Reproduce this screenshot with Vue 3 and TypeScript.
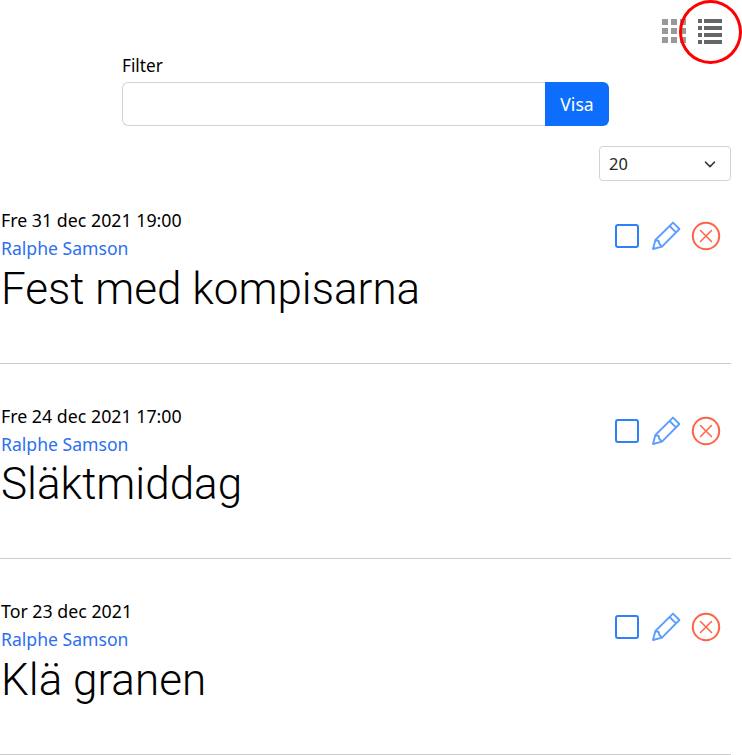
<script setup lang="ts">
interface EventRow {
  date: string
  owner: string
  title: string
}

const events: EventRow[] = [
  { date: 'Fre 31 dec 2021 19:00', owner: 'Ralphe Samson', title: 'Fest med kompisarna' },
  { date: 'Fre 24 dec 2021 17:00', owner: 'Ralphe Samson', title: 'Släktmiddag' },
  { date: 'Tor 23 dec 2021', owner: 'Ralphe Samson', title: 'Klä granen' },
]

const gridCells = [0, 1, 2, 3, 4, 5, 6, 7, 8]
const listRows = [0, 1, 2, 3]
</script>

<template>
  <div class="page">
    <div class="view-switch">
      <svg class="view-icon" width="26" height="26" viewBox="0 0 26 26" fill="#999">
        <rect
          v-for="c in gridCells"
          :key="c"
          :x="1 + (c % 3) * 9"
          :y="1 + Math.floor(c / 3) * 9"
          width="6"
          height="6"
        />
      </svg>
      <svg class="view-icon" width="26" height="26" viewBox="0 0 26 26" fill="#666">
        <g v-for="r in listRows" :key="r">
          <rect x="1" :y="1 + r * 7" width="4" height="4" />
          <rect x="7" :y="1 + r * 7" width="18" height="4" />
        </g>
      </svg>
      <span class="view-ring" />
    </div>

    <form class="filter" @submit.prevent>
      <label class="filter__label" for="filter-input">Filter</label>
      <div class="filter__group">
        <input id="filter-input" class="filter__input" type="text" />
        <button class="filter__btn" type="submit">Visa</button>
      </div>
    </form>

    <div class="page-size">
      <div class="page-size__select">
        <span>20</span>
        <svg width="16" height="16" viewBox="0 0 16 16" fill="none" stroke="#343a40" stroke-width="2" stroke-linecap="round" stroke-linejoin="round">
          <path d="M2 5l6 6 6-6" transform="translate(2 2.4) scale(.75)" />
        </svg>
      </div>
    </div>

    <ul class="events">
      <li v-for="ev in events" :key="ev.title" class="event">
        <div class="event__head">
          <div class="event__meta">
            <div class="event__date">{{ ev.date }}</div>
            <a class="event__owner" href="#">{{ ev.owner }}</a>
          </div>
          <div class="event__actions">
            <span class="event__check" />
            <svg width="30" height="30" viewBox="0 0 30 30" fill="none" stroke="#5c9dff" stroke-width="1.9" stroke-linejoin="round">
              <path d="M2 28l2.4-9L22 1.6 28.4 8 11 25.6z" />
              <path d="M18.6 5l6.4 6.4M4.4 19l3.2 1 .8 3 2.6 2.6" />
            </svg>
            <svg width="30" height="30" viewBox="0 0 30 30" fill="none" stroke="#ff6347" stroke-width="2" stroke-linecap="round">
              <circle cx="15" cy="15" r="13.2" />
              <path d="M9.5 9.5l11 11M20.5 9.5l-11 11" stroke-width="1.5" />
            </svg>
          </div>
        </div>
        <h2 class="event__title">{{ ev.title }}</h2>
      </li>
    </ul>
  </div>
</template>

<style>
body {
  margin: 0;
  background: #fff;
}
</style>

<style scoped>
.page {
  box-sizing: border-box;
  width: 742px;
  height: 755px;
  padding-right: 11px;
  overflow: hidden;
  font-family: "Noto Sans", "Open Sans", sans-serif;
  color: #000;
}

.view-switch {
  position: relative;
  display: flex;
  justify-content: flex-end;
  gap: 10px;
  padding-top: 18px;
  padding-right: 8px;
  height: 35px;
}

.view-icon {
  display: block;
}

.view-ring {
  position: absolute;
  left: 679px;
  top: 0;
  width: 63px;
  height: 64px;
  box-sizing: border-box;
  border: 3.5px solid #f00;
  border-radius: 50%;
}

.filter {
  margin: 0 122px 0 122px;
  width: 487px;
  padding-top: 0;
}

.filter__label {
  display: block;
  height: 29px;
  font-size: 17.2px;
  line-height: 26px;
}

.filter__group {
  display: flex;
  height: 44px;
}

.filter__input {
  flex: 1;
  min-width: 0;
  box-sizing: border-box;
  border: 1px solid #ced4da;
  border-right: 0;
  border-radius: 6px 0 0 6px;
  outline: none;
}

.filter__btn {
  width: 64px;
  border: 0;
  border-radius: 0 6px 6px 0;
  background: #0d6efd;
  color: #fff;
  font: inherit;
  font-size: 17.6px;
}

.page-size {
  display: flex;
  justify-content: flex-end;
  margin-top: 20px;
}

.page-size__select {
  box-sizing: border-box;
  width: 132px;
  height: 35px;
  display: flex;
  align-items: center;
  justify-content: space-between;
  padding: 0 12px 0 9px;
  border: 1px solid #ced4da;
  border-radius: 4px;
  font-size: 16.4px;
  color: #212529;
}

.events {
  list-style: none;
  margin: 0;
  padding: 0;
}

.event {
  box-sizing: border-box;
  height: 195.5px;
  border-bottom: 1px solid #ccc;
}

.events .event:first-child {
  height: 182.5px;
}

.event__head {
  display: flex;
  justify-content: space-between;
  align-items: flex-start;
}

.event__meta {
  padding-left: 1px;
}

.event:first-child .event__head {
  padding-top: 27px;
}

.event:not(:first-child) .event__head {
  padding-top: 40px;
}

.event__date {
  font-size: 17.8px;
  line-height: 24px;
  height: 28px;
}

.event__owner {
  display: block;
  font-size: 17.6px;
  line-height: 24px;
  color: #2c6ff0;
  text-decoration: none;
}

.event__actions {
  display: flex;
  align-items: center;
  gap: 10px;
  padding-right: 10px;
  margin-top: 12.7px;
}

.event__check {
  box-sizing: border-box;
  width: 24px;
  height: 24px;
  margin-right: 2px;
  border: 2px solid #2f80fb;
  border-radius: 3px;
}

.event__title {
  margin: 0;
  padding-top: 2.8px;
  font-family: Roboto, sans-serif;
  font-weight: 300;
  font-size: 44px;
  line-height: 52px;
  padding-left: 1px;
}
</style>
